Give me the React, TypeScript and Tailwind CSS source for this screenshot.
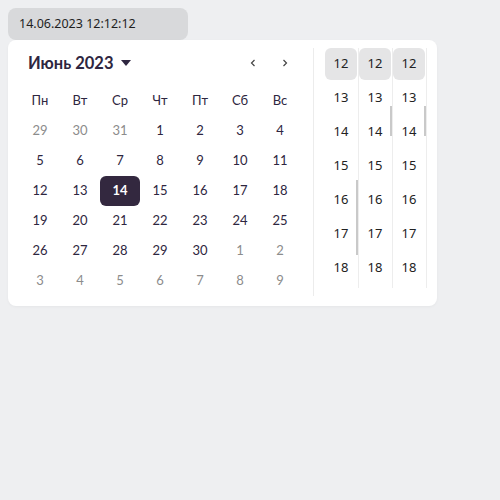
import React from 'react';

const weekDays = ['Пн', 'Вт', 'Ср', 'Чт', 'Пт', 'Сб', 'Вс'];

// June 2023 grid, outside days marked
const weeks: { d: number; out?: boolean }[][] = [
  [{ d: 29, out: true }, { d: 30, out: true }, { d: 31, out: true }, { d: 1 }, { d: 2 }, { d: 3 }, { d: 4 }],
  [{ d: 5 }, { d: 6 }, { d: 7 }, { d: 8 }, { d: 9 }, { d: 10 }, { d: 11 }],
  [{ d: 12 }, { d: 13 }, { d: 14 }, { d: 15 }, { d: 16 }, { d: 17 }, { d: 18 }],
  [{ d: 19 }, { d: 20 }, { d: 21 }, { d: 22 }, { d: 23 }, { d: 24 }, { d: 25 }],
  [{ d: 26 }, { d: 27 }, { d: 28 }, { d: 29 }, { d: 30 }, { d: 1, out: true }, { d: 2, out: true }],
  [{ d: 3, out: true }, { d: 4, out: true }, { d: 5, out: true }, { d: 6, out: true }, { d: 7, out: true }, { d: 8, out: true }, { d: 9, out: true }],
];

const times = [12, 13, 14, 15, 16, 17, 18];

function TimeColumn({ thumbTop, thumbHeight }: { thumbTop: number; thumbHeight: number }) {
  return (
    <div className="relative w-[34px] h-[240px] border-r border-[#ededed] overflow-hidden">
      {times.map((t, i) => (
        <div
          key={t}
          className={
            'w-[32px] h-[32px] mb-[2px] flex items-center justify-center rounded-md text-[13px] text-[#222] ' +
            (i === 0 ? 'bg-[#e5e5e6]' : '')
          }
        >
          {t}
        </div>
      ))}
      <div
        className="absolute right-0 w-[2px] bg-[#c9c9c9]"
        style={{ top: thumbTop, height: thumbHeight }}
      />
    </div>
  );
}

export default function App() {
  return (
    <div className="min-h-screen bg-[#eeeff1] p-2" style={{ fontFamily: '"Noto Sans", sans-serif' }}>
      <div className="w-[180px] h-8 rounded-lg bg-[#d8d9db] px-[11px] flex items-center text-[12.5px] text-[#1f1f1f]">
        14.06.2023 12:12:12
      </div>
      <div className="w-[429px] h-[266px] bg-white rounded-lg flex py-2 shadow-[0_1px_3px_rgba(0,0,0,0.04)]">
        {/* calendar */}
        <div className="pl-3 pr-[13px]" style={{ fontFamily: 'Lato, sans-serif' }}>
          <div className="h-[30px] flex items-center text-[#2e2640]">
            <div className="pl-2 flex items-center gap-[6px] text-[16.5px] font-bold">
              Июнь 2023
              <svg width="12" height="8" viewBox="0 0 12 8">
                <path d="M1 1h10L6 7z" fill="#2e2640" />
              </svg>
            </div>
            <div className="ml-auto flex items-center">
              <span className="w-8 h-6 flex items-center justify-center">
                <svg width="6" height="8" viewBox="0 0 6 8">
                  <path d="M4.5 1L1.5 4l3 3" fill="none" stroke="#444" strokeWidth="1.2" />
                </svg>
              </span>
              <span className="w-8 h-6 flex items-center justify-center mr-[-1px]">
                <svg width="6" height="8" viewBox="0 0 6 8">
                  <path d="M1.5 1l3 3-3 3" fill="none" stroke="#444" strokeWidth="1.2" />
                </svg>
              </span>
            </div>
          </div>
          <div className="mt-2 grid grid-cols-7 w-[280px]">
            {weekDays.map((w) => (
              <div key={w} className="h-[30px] flex items-center justify-center text-[13px] text-[#2e2640]">
                {w}
              </div>
            ))}
            {weeks.flat().map((c, i) => (
              <div
                key={i}
                className={
                  'h-[30px] flex items-center justify-center text-[13px] rounded-md ' +
                  (c.d === 14 && !c.out
                    ? 'bg-[#33283f] text-white font-bold'
                    : c.out
                    ? 'text-[#8c8c8c]'
                    : 'text-[#2e2640]')
                }
              >
                {c.d}
              </div>
            ))}
          </div>
        </div>
        {/* time */}
        <div className="border-l border-[#ececec] pl-[11px] h-[248px]">
          <div className="flex">
            <TimeColumn thumbTop={132} thumbHeight={75} />
            <TimeColumn thumbTop={58} thumbHeight={30} />
            <TimeColumn thumbTop={58} thumbHeight={30} />
          </div>
        </div>
      </div>
    </div>
  );
}
